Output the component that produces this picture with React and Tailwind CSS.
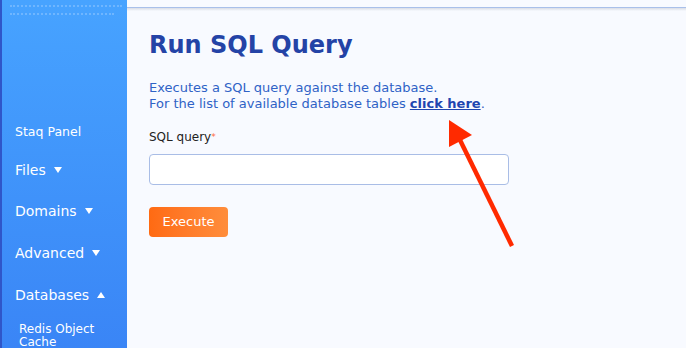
import React from 'react';

const Caret = ({ up }) => (
  <svg width="8" height="6" viewBox="0 0 8 6" className="ml-2 inline-block">
    <polygon points={up ? "4,0 8,6 0,6" : "0,0 8,0 4,6"} fill="white" />
  </svg>
);

const NavItem = ({ label, up, className }) => (
  <div className={`flex items-center text-[14px] leading-[18px] text-white ${className}`}>
    {label}
    <Caret up={up} />
  </div>
);

export default function App() {
  return (
    <div className="relative flex h-[348px] w-[686px] overflow-hidden font-['DejaVu_Sans',sans-serif]">
      {/* Sidebar */}
      <aside className="flex w-[127px] flex-col border-l-2 border-[#2f56c9] bg-gradient-to-b from-[#47a3ff] to-[#3a85f6] pl-[8px]">
        <div className="mt-[5px] w-[112px] border-t-2 border-dotted border-[#6fb6ff]" />
        <div className="mt-[6px] w-[104px] border-t-2 border-dotted border-[#6fb6ff]" />
        <div className="flex flex-col pl-[5px]">
          <div className="mt-[108px] text-[12.5px] leading-[18px] text-white">Staq Panel</div>
          <NavItem label="Files" className="mt-5" />
          <NavItem label="Domains" className="mt-[23px]" />
          <NavItem label="Advanced" className="mt-6" />
          <NavItem label="Databases" up className="mt-6" />
          <div className="mt-[19px] pl-1 text-[12px] leading-[13px] text-white">
            Redis Object
            <br />
            Cache
          </div>
        </div>
      </aside>

      {/* Main */}
      <main className="flex flex-1 flex-col bg-[#f8faff]">
        <div className="h-[7px] bg-[#f8faff]" />
        <div className="h-px bg-[#a9c0ea]" />
        <div className="h-[3px] bg-gradient-to-b from-[#d9dde6] to-[#f8faff]" />
        <div className="flex flex-col pl-[22px]">
          <h1 className="mt-[19px] text-[24px] font-bold leading-[30px] text-[#2443a6]">Run SQL Query</h1>
          <p className="mt-5 text-[13px] leading-[16px] text-[#2f62c6]">
            Executes a SQL query against the database.
            <br />
            For the list of available database tables{' '}
            <a href="#" className="font-bold text-[#1e45b0] underline">click here</a>.
          </p>
          <label className="mt-[17px] text-[12px] leading-[16px] text-[#222]">
            SQL query<span className="align-top text-[9px] text-[#ff6a3a]">*</span>
          </label>
          <input
            type="text"
            className="mt-[9px] h-[31px] w-[360px] rounded border border-[#a9bde6] bg-white outline-none"
          />
          <button className="mt-[22px] h-[30px] w-[79px] rounded bg-gradient-to-r from-[#ff6a12] to-[#ff8d3b] text-[13px] text-white">
            Execute
          </button>
        </div>
      </main>

      {/* Annotation arrow */}
      <svg className="pointer-events-none absolute left-0 top-0" width="686" height="348">
        <line x1="512" y1="246" x2="459" y2="138" stroke="#ff2a00" strokeWidth="4.5" />
        <polygon points="449,120 472,135 449,147" fill="#ff2a00" />
      </svg>
    </div>
  );
}
